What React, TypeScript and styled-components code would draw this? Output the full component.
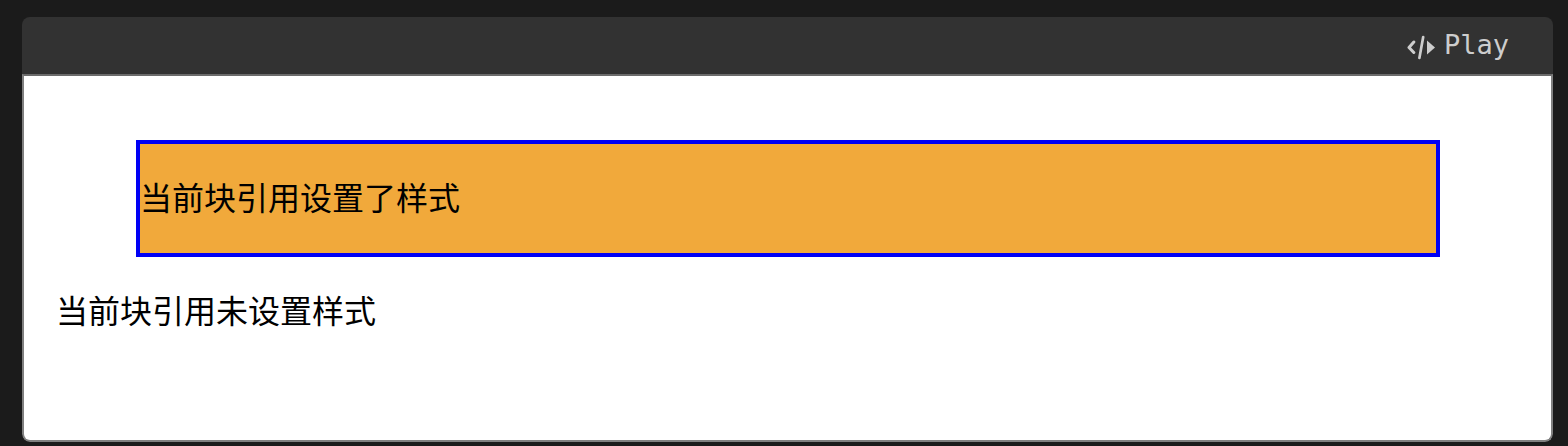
import React from "react";
import styled, { createGlobalStyle } from "styled-components";

const GlobalStyle = createGlobalStyle`
  *, *::before, *::after {
    box-sizing: border-box;
  }
  body {
    margin: 0;
    background: #1b1b1b;
  }
`;

const Page = styled.main`
  padding: 17px 15px 4px 22px;
`;

const Example = styled.section`
  border-radius: 8px;
  overflow: hidden;
`;

const Toolbar = styled.header`
  display: flex;
  justify-content: flex-end;
  align-items: center;
  height: 57px;
  padding: 0 44px 2px;
  background: #323232;
`;

const PlayButton = styled.button`
  display: flex;
  align-items: center;
  gap: 9px;
  padding: 0;
  border: 0;
  background: none;
  color: #cdcdcd;
  font: 27px/32px "DejaVu Sans Mono", monospace;
  cursor: pointer;
`;

const CodeIcon = styled.svg`
  display: block;
  width: 28px;
  height: 28px;
  margin-top: 4px;
`;

const Preview = styled.div`
  padding: 64px 31px 106px 32px;
  border: 2px solid #808080;
  border-top-color: #6b6b6b;
  border-radius: 0 0 8px 8px;
  background: #fff;
  color: #000;
  font: 32px/41px "Noto Sans CJK SC", sans-serif;
`;

const Paragraph = styled.p`
  margin: 32px 0;
  padding-bottom: 4px;
`;

const StyledQuote = styled.blockquote`
  display: flow-root;
  margin: 0 80px 32px;
  border: 4px solid #0000f5;
  background: #f1a93b;
`;

const PlainQuote = styled.blockquote`
  margin: 0;

  ${Paragraph} {
    margin: 0;
  }
`;

export default function App() {
  return (
    <Page>
      <GlobalStyle />
      <Example>
        <Toolbar>
          <PlayButton type="button">
            <CodeIcon viewBox="0 0 28 28" aria-hidden="true">
              <path d="M6.8 9 L2 14.5 L6.8 19.5" fill="none" stroke="currentColor" strokeWidth="3" strokeLinecap="round" strokeLinejoin="round" />
              <path d="M16.2 4 L12.4 25" fill="none" stroke="currentColor" strokeWidth="2.7" strokeLinecap="round" />
              <path d="M20 7.5 V21.5 L28 14.5 Z" fill="currentColor" />
            </CodeIcon>
            Play
          </PlayButton>
        </Toolbar>
        <Preview lang="zh-CN">
          <StyledQuote>
            <Paragraph>当前块引用设置了样式</Paragraph>
          </StyledQuote>
          <PlainQuote>
            <Paragraph>当前块引用未设置样式</Paragraph>
          </PlainQuote>
        </Preview>
      </Example>
    </Page>
  );
}
